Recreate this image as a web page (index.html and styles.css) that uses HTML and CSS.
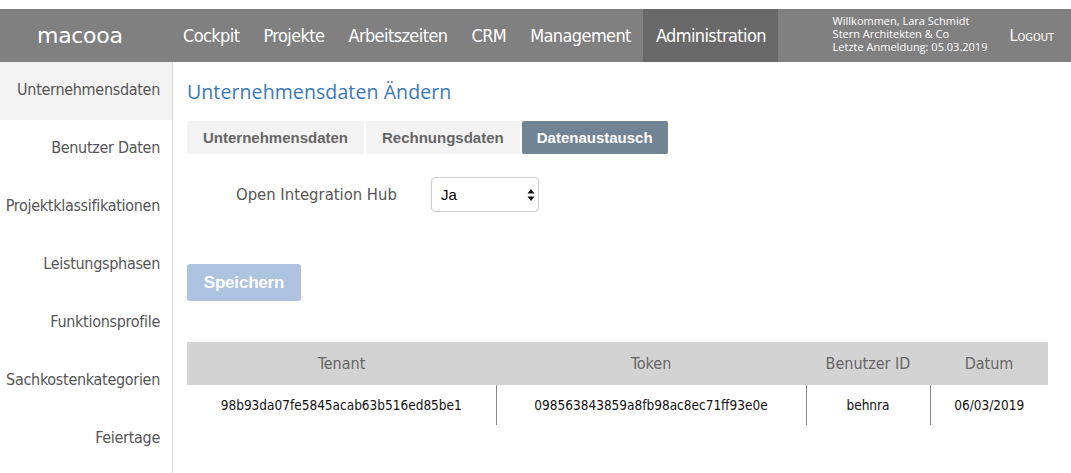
FILE: index.html
```html
<!DOCTYPE html>
<html lang="de">
<head>
<meta charset="utf-8">
<title>macooa – Administration</title>
<link rel="stylesheet" href="styles.css">
</head>
<body>
<header class="topbar">
  <div class="logo">macooa</div>
  <nav class="mainnav">
    <a class="navitem">Cockpit</a>
    <a class="navitem">Projekte</a>
    <a class="navitem">Arbeitszeiten</a>
    <a class="navitem">CRM</a>
    <a class="navitem">Management</a>
    <a class="navitem active">Administration</a>
  </nav>
  <div class="userinfo">
    <div>Willkommen, Lara Schmidt</div>
    <div>Stern Architekten &amp; Co</div>
    <div>Letzte Anmeldung: 05.03.2019</div>
  </div>
  <a class="logout">Logout</a>
</header>
<div class="layout">
  <aside class="sidebar">
    <a class="sideitem active">Unternehmensdaten</a>
    <a class="sideitem">Benutzer Daten</a>
    <a class="sideitem">Projektklassifikationen</a>
    <a class="sideitem">Leistungsphasen</a>
    <a class="sideitem">Funktionsprofile</a>
    <a class="sideitem">Sachkostenkategorien</a>
    <a class="sideitem">Feiertage</a>
  </aside>
  <main class="content">
    <h1 class="title">Unternehmensdaten Ändern</h1>
    <div class="tabs">
      <a class="tab">Unternehmensdaten</a>
      <a class="tab">Rechnungsdaten</a>
      <a class="tab active">Datenaustausch</a>
    </div>
    <div class="formrow">
      <label class="label">Open Integration Hub</label>
      <div class="selectwrap">
        <select class="select"><option>Ja</option><option>Nein</option></select>
        <svg class="arrows" width="8" height="14" viewBox="0 0 8 14"><path d="M4 1 L7.5 5.5 H0.5 Z M4 13 L7.5 8.5 H0.5 Z" fill="#111"/></svg>
      </div>
    </div>
    <button class="save">Speichern</button>
    <table class="datatable">
      <colgroup><col class="c1"><col class="c2"><col class="c3"><col class="c4"></colgroup>
      <thead>
        <tr><th>Tenant</th><th>Token</th><th>Benutzer ID</th><th>Datum</th></tr>
      </thead>
      <tbody>
        <tr><td>98b93da07fe5845acab63b516ed85be1</td><td>098563843859a8fb98ac8ec71ff93e0e</td><td>behnra</td><td>06/03/2019</td></tr>
      </tbody>
    </table>
  </main>
</div>
</body>
</html>
```
FILE: styles.css
```css
html, body {
  margin: 0;
  padding: 0;
  background: #fff;
}
body {
  padding-top: 9px;
  font-family: "DejaVu Sans Condensed", "DejaVu Sans", sans-serif;
  font-stretch: condensed;
  color: #555;
}
a { text-decoration: none; cursor: pointer; }

.topbar {
  display: flex;
  align-items: stretch;
  height: 53px;
  background: #808080;
  color: #fff;
}
.logo {
  width: 134px;
  padding-left: 37px;
  display: flex;
  align-items: center;
  font-family: "DejaVu Sans", sans-serif;
  font-stretch: normal;
  font-size: 22px;
  letter-spacing: -0.3px;
}
.mainnav {
  display: flex;
  align-items: stretch;
}
.navitem {
  display: flex;
  align-items: center;
  padding: 0 12px;
  font-size: 18px;
  letter-spacing: -0.6px;
  color: #fff;
}
.navitem.active {
  background: #696969;
  padding: 0 12px 0 13px;
}
.userinfo {
  margin-left: auto;
  font-family: "Open Sans", sans-serif;
  font-stretch: normal;
  font-size: 11px;
  line-height: 13px;
  color: #fff;
  letter-spacing: 0;
  display: flex;
  flex-direction: column;
  justify-content: center;
  padding-bottom: 4px;
}
.logout {
  display: flex;
  align-items: center;
  margin: 0 17px 0 22px;
  font-variant: small-caps;
  font-size: 16px;
  color: #fff;
}

.layout {
  display: flex;
  align-items: stretch;
}
.sidebar {
  width: 172px;
  border-right: 1px solid #ddd;
  display: flex;
  flex-direction: column;
  flex-shrink: 0;
  min-height: 411px;
}
.sideitem {
  height: 58px;
  display: flex;
  align-items: center;
  justify-content: flex-end;
  padding: 0 12px 3px 0;
  box-sizing: border-box;
  font-size: 16px;
  color: #555;
  letter-spacing: -0.3px;
}
.sideitem.active { background: #f3f3f3; }

.content {
  flex: 1;
  padding: 17px 23px 0 14px;
}
.title {
  margin: 0;
  font-family: "Open Sans", sans-serif;
  font-stretch: normal;
  font-weight: normal;
  font-size: 19.5px;
  line-height: 26px;
  color: #3a78b6;
  letter-spacing: 0.1px;
}
.tabs {
  display: flex;
  gap: 2px;
  margin-top: 16px;
}
.tab {
  height: 33px;
  display: flex;
  align-items: center;
  padding: 0 16px;
  background: #f3f3f3;
  border-radius: 2px;
  font-family: "Liberation Sans", Arial, sans-serif;
  font-stretch: normal;
  font-weight: bold;
  font-size: 15px;
  color: #666;
}
.tab.active {
  background: #718496;
  color: #fff;
  padding: 0 15px;
}
.formrow {
  display: flex;
  align-items: center;
  margin-top: 23px;
  padding-left: 49px;
}
.label {
  width: 195px;
  font-size: 16.5px;
  letter-spacing: 0;
  color: #555;
}
.selectwrap {
  position: relative;
  width: 108px;
  height: 35px;
}
.select {
  appearance: none;
  -webkit-appearance: none;
  width: 100%;
  height: 100%;
  border: 1px solid #ccc;
  border-radius: 4px;
  background: #fff;
  padding: 0 0 0 9px;
  font-family: "Liberation Sans", Arial, sans-serif;
  font-stretch: normal;
  font-size: 15px;
  color: #000;
}
.arrows {
  position: absolute;
  right: 4px;
  top: 11px;
  pointer-events: none;
}
.save {
  display: block;
  margin-top: 52px;
  width: 114px;
  height: 37px;
  border: none;
  border-radius: 3px;
  background: #adc3e0;
  color: #fff;
  font-family: "Liberation Sans", Arial, sans-serif;
  font-weight: bold;
  font-size: 17px;
  letter-spacing: -0.2px;
}
.datatable {
  margin-top: 41px;
  border-collapse: collapse;
  table-layout: fixed;
  width: 861px;
}
.c1 { width: 309px; }
.c2 { width: 310px; }
.c3 { width: 124px; }
.c4 { width: 118px; }
.datatable th {
  height: 43px;
  background: #d3d3d3;
  font-weight: normal;
  font-size: 16px;
  color: #666;
  padding: 0;
}
.datatable td {
  height: 40px;
  padding: 0;
  text-align: center;
  font-size: 13.5px;
  color: #111;
  border-left: 1px solid #888;
}
.datatable td:first-child { border-left: none; }
```
